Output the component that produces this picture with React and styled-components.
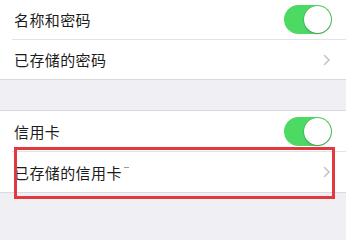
import React from "react";
import styled, { createGlobalStyle } from "styled-components";

const GlobalStyle = createGlobalStyle`
  html, body {
    margin: 0;
    padding: 0;
    background: #efeff4;
  }
  body {
    font-family: "Noto Sans CJK SC", "Noto Sans", sans-serif;
    -webkit-font-smoothing: antialiased;
  }
`;

const Screen = styled.div`
  width: 346px;
  height: 208px;
  overflow: hidden;
  background: #efeff4;
  position: relative;
`;

const Group = styled.div`
  background: #fff;
  border-top: ${(props) => (props.$topBorder ? "1px solid #d9d9de" : "none")};
  border-bottom: 1px solid #d9d9de;
  margin-top: ${(props) => props.$gap || 0}px;
`;

const Row = styled.div`
  position: relative;
  display: flex;
  align-items: center;
  justify-content: space-between;
  height: ${(props) => props.$height || 40}px;
  padding: 0 14px 0 14px;
  border-bottom: ${(props) => (props.$divider ? "1px solid #e3e3e7" : "none")};
  margin-left: ${(props) => (props.$divider ? "0" : "0")};
`;

const Divider = styled.div`
  height: 1px;
  background: #e3e3e7;
  margin-left: 12px;
`;

const Label = styled.span`
  font-size: 15px;
  color: #1c1c1c;
  letter-spacing: 0.4px;
  line-height: 1;
  display: flex;
  align-items: center;
`;

const Mark = styled.span`
  display: inline-block;
  width: 5px;
  height: 1px;
  background: #9a9a9a;
  margin-left: 2px;
  margin-bottom: 9px;
`;

const Switch = styled.div`
  width: 48px;
  height: 29px;
  border-radius: 15px;
  background: #4cd964;
  position: relative;
  margin-right: 0;
`;

const Knob = styled.div`
  position: absolute;
  top: 1px;
  right: 1px;
  width: 27px;
  height: 27px;
  border-radius: 50%;
  background: #fff;
  box-shadow: 0 1px 2px rgba(0, 0, 0, 0.25), 0 0 0 0.5px rgba(0, 0, 0, 0.1);
`;

const Chevron = styled.svg`
  width: 7px;
  height: 12px;
  margin-right: 2px;
`;

const Highlight = styled.div`
  position: absolute;
  left: 14px;
  top: 147px;
  width: 321px;
  height: 52px;
  box-sizing: border-box;
  border: 3px solid #e2393f;
  pointer-events: none;
`;

const Arrow = () => (
  <Chevron viewBox="0 0 7 12">
    <path d="M1 1l5 5-5 5" fill="none" stroke="#c7c7cc" strokeWidth="1.6" />
  </Chevron>
);

const Toggle = () => (
  <Switch>
    <Knob />
  </Switch>
);

export default function App() {
  return (
    <Screen>
      <GlobalStyle />
      <Group>
        <Row $height={39}>
          <Label>名称和密码</Label>
          <Toggle />
        </Row>
        <Divider />
        <Row $height={39}>
          <Label>已存储的密码</Label>
          <Arrow />
        </Row>
      </Group>
      <Group $topBorder $gap={30}>
        <Row $height={40}>
          <Label>信用卡</Label>
          <Toggle />
        </Row>
        <Divider />
        <Row $height={40}>
          <Label>
            已存储的信用卡
            <Mark />
          </Label>
          <Arrow />
        </Row>
      </Group>
      <Highlight />
    </Screen>
  );
}
